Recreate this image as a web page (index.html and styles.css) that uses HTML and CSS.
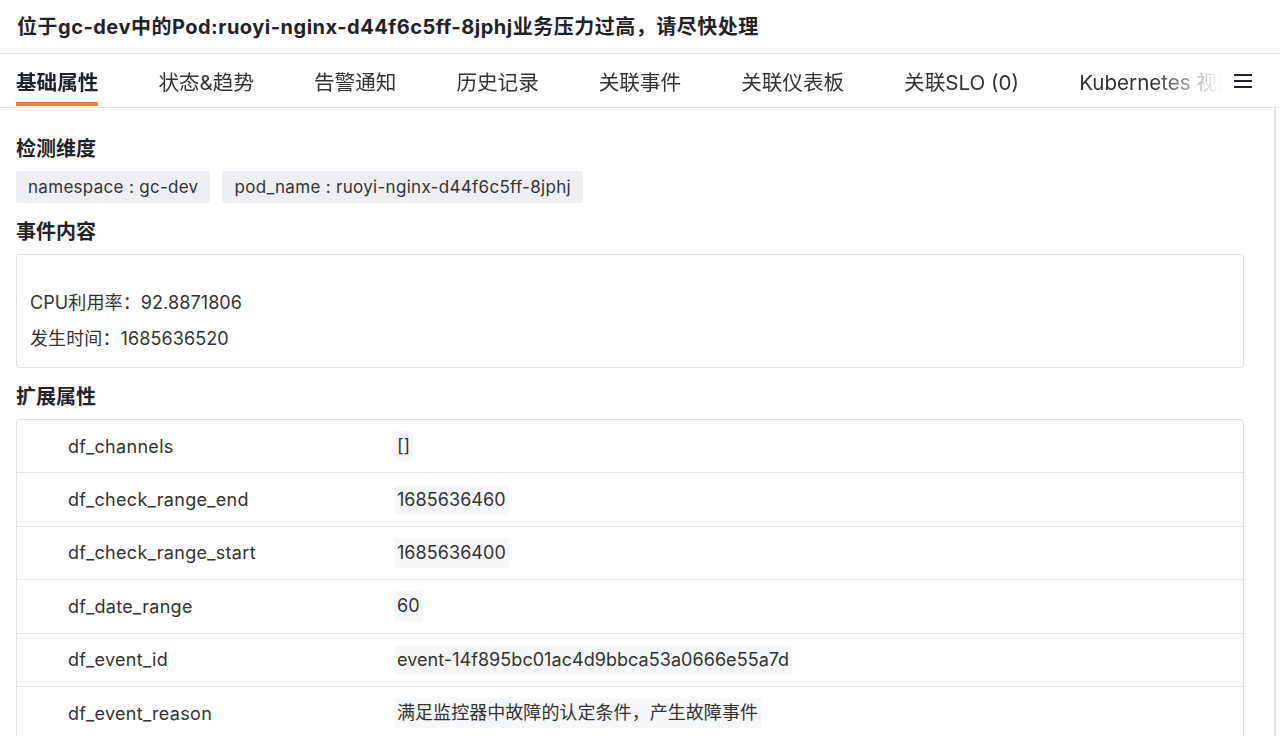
FILE: index.html
```html
<!DOCTYPE html>
<html lang="zh-CN">
<head>
    <meta charset="UTF-8">
    <meta name="viewport" content="width=device-width, initial-scale=1.0">
    <title>事件详情</title>
    <link rel="stylesheet" href="styles.css">
</head>
<body>
    <div class="header">
        <h1>位于gc-dev中的Pod:ruoyi-nginx-d44f6c5ff-8jphj业务压力过高，请尽快处理</h1>
    </div>

    <div class="tabbar">
        <div class="tabs">
            <div class="tab active">基础属性</div>
            <div class="tab">状态&amp;趋势</div>
            <div class="tab">告警通知</div>
            <div class="tab">历史记录</div>
            <div class="tab">关联事件</div>
            <div class="tab">关联仪表板</div>
            <div class="tab">关联SLO (0)</div>
            <div class="tab">Kubernetes 视图</div>
        </div>
        <div class="menu">
            <svg width="20" height="16" viewBox="0 0 20 16">
                <path d="M1 2h18M1 8h18M1 14h18" stroke="#1f2329" stroke-width="2.2" fill="none"/>
            </svg>
        </div>
    </div>

    <div class="page">
        <div class="content">
            <div class="section">
                <h2>检测维度</h2>
                <div class="tags">
                    <span class="tag">namespace : gc-dev</span>
                    <span class="tag">pod_name : ruoyi-nginx-d44f6c5ff-8jphj</span>
                </div>
            </div>

            <div class="section">
                <h2>事件内容</h2>
                <div class="message">
                    <p>CPU利用率：92.8871806</p>
                    <p>发生时间：1685636520</p>
                </div>
            </div>

            <div class="section">
                <h2>扩展属性</h2>
                <div class="attrs">
                    <div class="row">
                        <div class="key">df_channels</div>
                        <div class="val"><span>[]</span></div>
                    </div>
                    <div class="row">
                        <div class="key">df_check_range_end</div>
                        <div class="val"><span>1685636460</span></div>
                    </div>
                    <div class="row">
                        <div class="key">df_check_range_start</div>
                        <div class="val"><span>1685636400</span></div>
                    </div>
                    <div class="row">
                        <div class="key">df_date_range</div>
                        <div class="val"><span>60</span></div>
                    </div>
                    <div class="row">
                        <div class="key">df_event_id</div>
                        <div class="val"><span>event-14f895bc01ac4d9bbca53a0666e55a7d</span></div>
                    </div>
                    <div class="row">
                        <div class="key">df_event_reason</div>
                        <div class="val"><span>满足监控器中故障的认定条件，产生故障事件</span></div>
                    </div>
                </div>
            </div>
        </div>
        <div class="track"></div>
    </div>
</body>
</html>
```

FILE: styles.css
```css
html, body {
    height: 100%;
}
body {
    font-family: Inter, "Noto Sans CJK SC", sans-serif;
    margin: 0;
    padding: 0;
    color: #1f2329;
    background: #fff;
    overflow: hidden;
    display: flex;
    flex-direction: column;
}
.header {
    height: 50px;
    padding: 0 17px 3px;
    border-bottom: 1px solid #e4e4e8;
    display: flex;
    align-items: center;
}
h1 {
    margin: 0;
    font-size: 20px;
    font-weight: 700;
    letter-spacing: 0.5px;
}
.tabbar {
    height: 53px;
    border-bottom: 1px solid #e4e4e8;
    display: flex;
    align-items: stretch;
    padding-left: 16px;
}
.tabs {
    display: flex;
    width: 1206px;
    overflow: hidden;
    white-space: nowrap;
    -webkit-mask-image: linear-gradient(to right, #000 1136px, transparent 1206px);
    mask-image: linear-gradient(to right, #000 1136px, transparent 1206px);
}
.tab {
    position: relative;
    font-size: 20.6px;
    color: #333;
    display: flex;
    align-items: center;
    margin-right: 60px;
    flex-shrink: 0;
}
.tab.active {
    font-weight: 700;
    color: #1f2329;
}
.tab.active::after {
    content: "";
    position: absolute;
    left: 0;
    right: 0;
    bottom: 1px;
    height: 4px;
    background: #f47a31;
}
.menu {
    display: flex;
    align-items: center;
    padding-left: 11px;
}
.page {
    flex: 1;
    display: flex;
    min-height: 0;
}
.content {
    flex: 1;
    padding: 27px 30px 0 16px;
}
.track {
    width: 4px;
    border-left: 2px solid #e2e2e6;
}
.section {
    margin-bottom: 15px;
}
h2 {
    margin: 0 0 8px;
    font-size: 20px;
    line-height: 28px;
    font-weight: 700;
}
.tags {
    display: flex;
    gap: 12px;
}
.tag {
    background: #eeeff2;
    border-radius: 3px;
    height: 32px;
    line-height: 32px;
    padding: 0 12px;
    font-size: 17px;
    letter-spacing: 0.3px;
    color: #333;
}
.message {
    border: 1px solid #e1e2e6;
    border-radius: 3px;
    padding: 30px 13px 10px;
    font-size: 18px;
    letter-spacing: 0.1px;
    color: #333;
}
.message p {
    margin: 0;
    line-height: 36px;
}
.attrs {
    border: 1px solid #e1e2e6;
    border-radius: 3px;
}
.row {
    display: grid;
    grid-template-columns: 377px 1fr;
    align-items: center;
    height: 52.4px;
    border-top: 1px solid #e4e5e9;
    font-size: 18px;
    color: #333;
}
.row:first-child {
    border-top: none;
}
.key {
    padding-left: 51px;
    letter-spacing: 0.3px;
}
.val span {
    display: inline-block;
    background: #f6f7f9;
    border-radius: 2px;
    height: 30px;
    line-height: 30px;
    padding: 0 3px;
    letter-spacing: 0.05px;
}
```
